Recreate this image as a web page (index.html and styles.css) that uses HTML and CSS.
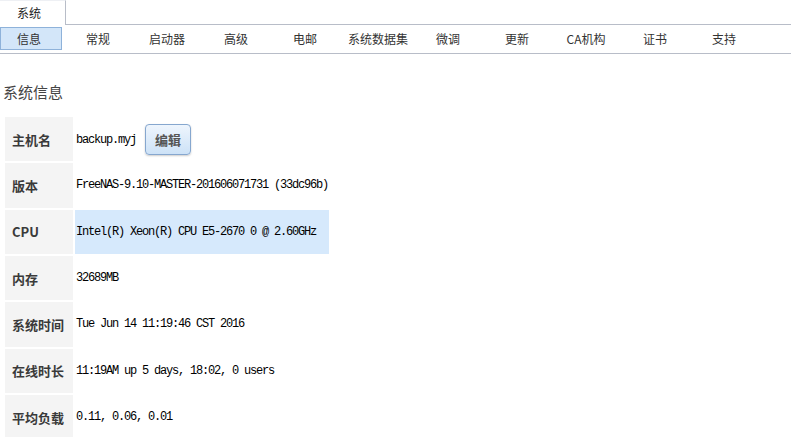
FILE: index.html
```html
<!DOCTYPE html>
<html lang="zh-CN">
<head>
  <meta charset="UTF-8">
  <meta name="viewport" content="width=device-width, initial-scale=1.0">
  <title>系统信息</title>
  <link rel="stylesheet" href="styles.css">
</head>
<body>
  <!-- Top tabs -->
  <div class="tabbar">
    <div class="tab">系统</div>
    <div class="tab-rest"></div>
  </div>

  <!-- Sub navigation -->
  <div class="subnav">
    <div class="nav-item active">信息</div>
    <div class="nav-item">常规</div>
    <div class="nav-item">启动器</div>
    <div class="nav-item">高级</div>
    <div class="nav-item">电邮</div>
    <div class="nav-item">系统数据集</div>
    <div class="nav-item">微调</div>
    <div class="nav-item">更新</div>
    <div class="nav-item">CA机构</div>
    <div class="nav-item">证书</div>
    <div class="nav-item">支持</div>
  </div>

  <h2 class="section-title">系统信息</h2>

  <table class="info">
    <tbody>
      <tr>
        <th>主机名</th>
        <td>backup.myj<button class="edit-btn">编辑</button></td>
      </tr>
      <tr>
        <th>版本</th>
        <td>FreeNAS-9.10-MASTER-201606071731 (33dc96b)</td>
      </tr>
      <tr>
        <th>CPU</th>
        <td class="hover">Intel(R) Xeon(R) CPU E5-2670 0 @ 2.60GHz</td>
      </tr>
      <tr>
        <th>内存</th>
        <td>32689MB</td>
      </tr>
      <tr>
        <th>系统时间</th>
        <td>Tue Jun 14 11:19:46 CST 2016</td>
      </tr>
      <tr>
        <th>在线时长</th>
        <td>11:19AM up 5 days, 18:02, 0 users</td>
      </tr>
      <tr>
        <th>平均负载</th>
        <td>0.11, 0.06, 0.01</td>
      </tr>
    </tbody>
  </table>
</body>
</html>
```

FILE: styles.css
```css
html {
  overflow: hidden;
}
body {
  margin: 0;
  font-family: "Noto Sans CJK SC", sans-serif;
  font-size: 12px;
  color: #333;
  background-color: #fff;
}
.tabbar {
  display: flex;
  height: 25px;
}
.tab {
  width: 58px;
  padding-right: 7px;
  border-right: 1px solid #b8bdc8;
  border-top: 1px solid #eef0f4;
  text-align: center;
  line-height: 23px;
  color: #222;
}
.tab-rest {
  flex: 1;
  border-bottom: 1px solid #b8bdc8;
}
.subnav {
  display: flex;
  padding: 2px 0 3px;
  border-bottom: 1px solid #b8bdc8;
}
.nav-item {
  min-width: 62px;
  height: 23px;
  box-sizing: border-box;
  padding: 0 6px 0 2px;
  margin-right: 7px;
  border: 1px solid transparent;
  text-align: center;
  line-height: 21px;
  white-space: nowrap;
}
.nav-item:nth-child(6) {
  margin-right: 4px;
}
.nav-item.active {
  background-color: #d3e6f9;
  border-color: #8eb2da;
}
.section-title {
  margin: 28px 0 0 3px;
  font-size: 15px;
  font-weight: normal;
  line-height: 20px;
  color: #444;
}
.info {
  margin: 13px 0 0 3px;
  border-spacing: 2px;
}
.info th {
  width: 61px;
  height: 44.33px;
  padding: 0 0 0 7px;
  background-color: #f4f4f4;
  text-align: left;
  font-size: 13px;
  font-weight: bold;
  color: #3a3a3a;
  white-space: nowrap;
}
.info td {
  padding: 0 1px;
  font-family: "Liberation Mono", monospace;
  font-size: 12px;
  letter-spacing: -1.2px;
  color: #000;
  white-space: nowrap;
}
.info td.hover {
  background-color: #d6e9fc;
}
.edit-btn {
  width: 46px;
  height: 31px;
  margin-left: 9px;
  border: 1px solid #86a7cf;
  border-radius: 4px;
  background: linear-gradient(#eef5fd, #cde2f7);
  box-shadow: 0 1px 2px rgba(0, 0, 0, 0.2);
  font-family: "Noto Sans CJK SC", sans-serif;
  font-size: 13px;
  font-weight: bold;
  letter-spacing: 0;
  color: #555;
  vertical-align: middle;
  cursor: pointer;
}
```
